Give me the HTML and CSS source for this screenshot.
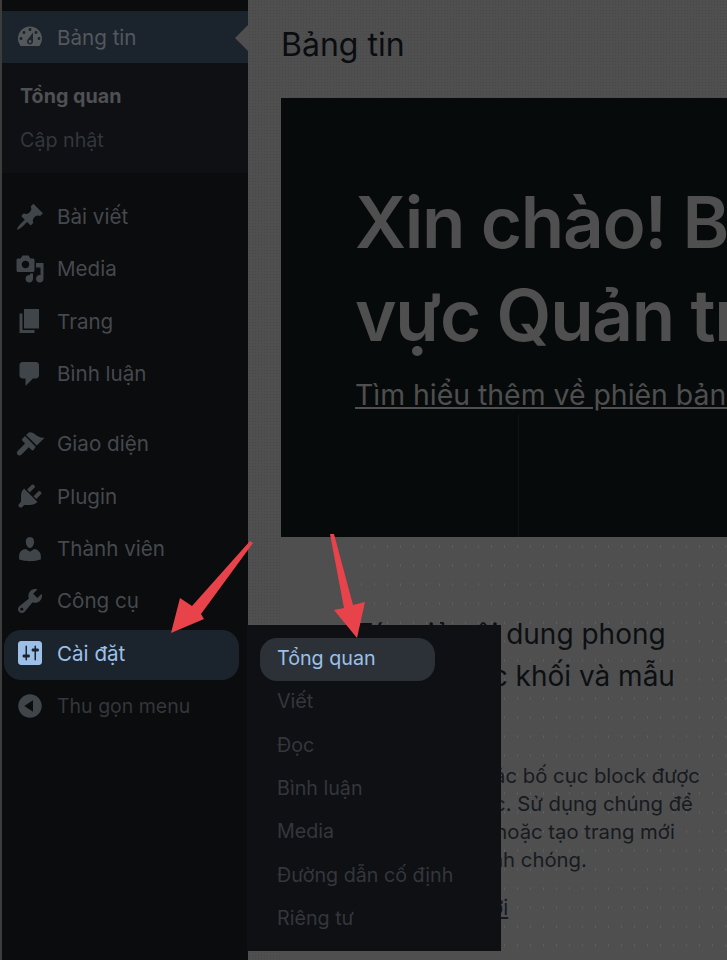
FILE: index.html
```html
<!DOCTYPE html>
<html lang="vi">
<head>
<meta charset="utf-8">
<title>Bảng tin</title>
<link rel="stylesheet" href="styles.css">
</head>
<body>
<div class="page">
  <aside class="sidebar">
    <ul class="menu">
      <li class="item active"><svg class="ico" viewBox="0 0 20 20"><path d="M3.76 16h12.48c1.1-1.37 1.76-3.11 1.76-5 0-4.42-3.58-8-8-8s-8 3.58-8 8c0 1.89.66 3.63 1.76 5zM10 4c.55 0 1 .45 1 1s-.45 1-1 1-1-.45-1-1 .45-1 1-1zM6 6c.55 0 1 .45 1 1s-.45 1-1 1-1-.45-1-1 .45-1 1-1zm8 0c.55 0 1 .45 1 1s-.45 1-1 1-1-.45-1-1 .45-1 1-1zm-5.37 5.55L12 7v6c0 1.1-.9 2-2 2s-2-.9-2-2c0-.57.24-1.08.63-1.45zM4 10c.55 0 1 .45 1 1s-.45 1-1 1-1-.45-1-1 .45-1 1-1zm12 0c.55 0 1 .45 1 1s-.45 1-1 1-1-.45-1-1 .45-1 1-1zm-5 3c0-.55-.45-1-1-1s-1 .45-1 1 .45 1 1 1 1-.45 1-1z"/></svg><span>Bảng tin</span></li>
      <li class="submenu">
        <a class="sub strong">Tổng quan</a>
        <a class="sub">Cập nhật</a>
      </li>
    </ul>
    <ul class="menu group">
      <li class="item"><svg class="ico" viewBox="0 0 20 20"><path d="M10.44 3.02l1.82-1.82 6.36 6.35-1.83 1.82c-1.05-.68-2.48-.57-3.41.36l-.75.75c-.92.93-1.04 2.35-.35 3.41l-1.83 1.82-2.41-2.41-2.8 2.79c-.42.42-3.38 2.71-3.8 2.29s1.86-3.39 2.28-3.81l2.79-2.79L4.1 9.36l1.83-1.82c1.05.69 2.48.57 3.4-.36l.75-.75c.93-.92 1.05-2.35.36-3.41z"/></svg><span>Bài viết</span></li>
      <li class="item"><svg class="ico" viewBox="0 0 20 20"><path d="M13 11V4c0-.55-.45-1-1-1h-1.67L9 1H5L3.67 3H2c-.55 0-1 .45-1 1v7c0 .55.45 1 1 1h10c.55 0 1-.45 1-1zM7 4.5c1.38 0 2.5 1.12 2.5 2.5S8.38 9.5 7 9.5 4.5 8.38 4.5 7 5.62 4.5 7 4.5zM14 6h5v10.5c0 1.38-1.12 2.5-2.5 2.5S14 17.88 14 16.5s1.12-2.5 2.5-2.5c.17 0 .34.02.5.05V9h-3V6zm-4 8.05V13h2v3.5c0 1.38-1.12 2.5-2.5 2.5S7 17.88 7 16.5 8.12 14 9.5 14c.17 0 .34.02.5.05z"/></svg><span>Media</span></li>
      <li class="item"><svg class="ico" viewBox="0 0 20 20"><path d="M6 15V2h10v13H6zm-1 1h8v2H3V5h2v11z"/></svg><span>Trang</span></li>
      <li class="item"><svg class="ico" viewBox="0 0 20 20"><path d="M5 2h9c1.1 0 2 .9 2 2v7c0 1.1-.9 2-2 2h-2l-5 5v-5H5c-1.1 0-2-.9-2-2V4c0-1.1.9-2 2-2z"/></svg><span>Bình luận</span></li>
    </ul>
    <ul class="menu group2">
      <li class="item"><svg class="ico" viewBox="0 0 20 20"><path d="M14.48 11.06L7.41 3.99l1.5-1.5c.5-.56 2.3-.47 3.51.32 1.21.8 1.43 1.28 2.91 2.1 1.18.64 2.45 1.26 4.45.85zM13.77 11.77L6.7 4.7 4.93 6.47c-.39.39-.39 1.02 0 1.41l1.8 1.8-5 5c-.7.7-.7 1.8 0 2.5s1.8.7 2.5 0l5-5 1.8 1.8c.39.39 1.02.39 1.41 0z"/></svg><span>Giao diện</span></li>
      <li class="item"><svg class="ico" viewBox="0 0 20 20"><path d="M13.11 4.36L9.87 7.6 8 5.73l3.24-3.24c.35-.34 1.05-.2 1.56.32.52.51.66 1.21.31 1.55zm-8 1.77l.91-1.12 9.01 9.01-1.19.84c-.71.71-2.63 1.16-3.82 1.16H6.14L4.9 17.26c-.59.59-1.54.59-2.12 0-.59-.58-.59-1.53 0-2.12l1.24-1.24v-3.88c0-1.13.4-3.19 1.09-3.89zm7.26 3.97l3.24-3.24c.34-.35 1.04-.21 1.55.31.52.51.66 1.21.31 1.55l-3.24 3.25z"/></svg><span>Plugin</span></li>
      <li class="item"><svg class="ico" viewBox="0 0 20 20"><path d="M10 9.25c-2.27 0-2.73-3.44-2.73-3.44C7 4.02 7.82 2 9.97 2c2.16 0 2.98 2.02 2.71 3.81 0 0-.41 3.44-2.68 3.44zm0 2.57L12.72 10c2.39 0 4.52 2.33 4.52 4.53v2.49s-3.65 1.13-7.24 1.13c-3.65 0-7.24-1.13-7.24-1.13v-2.49c0-2.25 1.94-4.48 4.47-4.48z"/></svg><span>Thành viên</span></li>
      <li class="item"><svg class="ico" viewBox="0 0 20 20"><path d="M16.68 9.77c-1.34 1.34-3.3 1.67-4.95.99l-5.41 6.52c-.99.99-2.59.99-3.58 0s-.99-2.59 0-3.57l6.52-5.42c-.68-1.65-.35-3.61.99-4.95 1.28-1.28 3.12-1.62 4.72-1.06l-2.89 2.89 2.82 2.82 2.86-2.87c.53 1.58.18 3.39-1.08 4.65zM3.81 16.21c.4.39 1.04.39 1.43 0 .4-.4.4-1.04 0-1.43-.39-.4-1.03-.4-1.43 0-.39.39-.39 1.03 0 1.43z"/></svg><span>Công cụ</span></li>
      <li class="item current"><svg class="ico" viewBox="0 0 20 20"><path d="M18 16V4c0-1.1-.9-2-2-2H4c-1.1 0-2 .9-2 2v12c0 1.1.9 2 2 2h12c1.1 0 2-.9 2-2zM8 11h1c.55 0 1 .45 1 1s-.45 1-1 1H8v1.5c0 .28-.22.5-.5.5s-.5-.22-.5-.5V13H6c-.55 0-1-.45-1-1s.45-1 1-1h1V5.5c0-.28.22-.5.5-.5s.5.22.5.5V11zm5-2h-1c-.55 0-1-.45-1-1s.45-1 1-1h1V5.5c0-.28.22-.5.5-.5s.5.22.5.5V7h1c.55 0 1 .45 1 1s-.45 1-1 1h-1v5.5c0 .28-.22.5-.5.5s-.5-.22-.5-.5V9z"/></svg><span>Cài đặt</span>
        <div class="flyout">
          <a class="fly on">Tổng quan</a>
          <a class="fly">Viết</a>
          <a class="fly">Đọc</a>
          <a class="fly">Bình luận</a>
          <a class="fly">Media</a>
          <a class="fly">Đường dẫn cố định</a>
          <a class="fly">Riêng tư</a>
        </div>
      </li>
      <li class="item collapse"><svg class="ico" viewBox="0 0 20 20"><path d="M10 2.16c4.33 0 7.84 3.51 7.84 7.84s-3.51 7.84-7.84 7.84S2.16 14.33 2.16 10 5.71 2.16 10 2.16zm2 11.72V6.12L6.18 9.97z"/></svg><span>Thu gọn menu</span></li>
    </ul>
  </aside>
  <main class="main">
    <h1 class="title">Bảng tin</h1>
    <section class="welcome">
      <h2 class="hero">Xin chào! Bạn đang ở khu<br>vực Quản trị WordPress</h2>
      <a class="hero-link">Tìm hiểu thêm về phiên bản 6.5</a>
    </section>
    <section class="column">
      <h3 class="col-title">Tác giả nội dung phong<br>phú với các khối và mẫu</h3>
      <p class="col-text">Mẫu block là các bố cục block được<br>thiết kế từ trước. Sử dụng chúng để<br>lấy cảm hứng, hoặc tạo trang mới<br>theo cách nhanh chóng.</p>
      <a class="col-link">Thêm trang mới</a>
    </section>
  </main>
</div>
<svg class="arrows" viewBox="0 0 727 960" aria-hidden="true">
  <polygon points="253,543 201,614 204,619 171,633 180,598 192,606 250,541"/>
  <polygon points="330,534 334,534 353,605 365,602 357,638 334,610 344,608"/>
</svg>
</body>
</html>
```
FILE: styles.css
```css
* { box-sizing: border-box; }
html, body { margin: 0; height: 960px; overflow: hidden; }
body { font-family: Inter, "Noto Sans", sans-serif; background: #4f4f4f; position: relative; }
.page { display: flex; width: 727px; height: 960px; overflow: hidden; }

.sidebar {
  width: 248px; flex: none; height: 960px; padding: 11px 0 0 2px;
  background: #0a0c0d; box-shadow: inset 2px 0 0 #3c3c3c;
}
.menu { list-style: none; margin: 0; padding: 0; }
.group { padding-top: 17px; }
.group2 { padding-top: 17.6px; }
.item {
  display: flex; align-items: center; height: 52.4px; padding-left: 13px; gap: 12px;
  font-size: 20.6px; color: #45494e; position: relative;
}
.ico { width: 30px; height: 30px; flex: none; fill: #40454a; }
.active { background: #1b232d; color: #55585b; }
.active .ico { fill: #55585b; }
.active::after {
  content: ""; position: absolute; right: 0; top: 14px;
  border: 13px solid transparent; border-left: 0; border-right-color: #4f4f4f;
}
.submenu { background: #0e1013; height: 110px; padding-top: 11px; display: flex; flex-direction: column; }
.sub { height: 44px; line-height: 44px; padding-left: 18px; font-size: 19.7px; color: #33373c; }
.strong { font-weight: 700; color: #4e5054; }
.current { color: #9cc0e8; }
.current .ico { fill: #9cc0e8; }
.current::before {
  content: ""; position: absolute; left: 2px; right: 9px; top: 3px; bottom: 0;
  background: #1b232d; border-radius: 17px; z-index: 0;
}
.current .ico, .current span { position: relative; z-index: 1; }
.collapse { color: #33373c; font-size: 19.5px; }
.collapse .ico { fill: #40454a; }

.flyout {
  position: absolute; left: 245px; top: -2px; width: 254px; height: 326px; z-index: 2;
  background: #0e1013; padding: 13px 13px 0; display: flex; flex-direction: column;
}
.fly { display: block; height: 43.3px; line-height: 41.3px; padding-left: 17px; font-size: 19.7px; color: #33373c; width: 175px; white-space: nowrap; }
.on { background: #2c3138; color: #9cc0e8; border-radius: 17px; }

.main {
  flex: 1; min-width: 0; padding: 0 0 0 33px; overflow: hidden;
  background-color: #4f4f4f;
  background-image: radial-gradient(#474747 .7px, transparent .8px);
  background-size: 3px 3px;
}
.title { margin: 0; padding-top: 26px; height: 98px; font-size: 32px; line-height: 38px; font-weight: 400; color: #0a0c0f; white-space: nowrap; }
.welcome {
  width: 560px; height: 439px; padding: 78px 0 0 74px; white-space: nowrap;
  background: linear-gradient(#101313, #101313) no-repeat 237px 317px / 1px 122px, #070a0a;
}
.hero { margin: 0; font-size: 71px; line-height: 93px; font-weight: 600; color: #4f4f4f; letter-spacing: -1.3px; }
.hero-link { display: block; margin-top: 15px; font-size: 28.4px; line-height: 36px; color: #4f4f4f; text-decoration: underline; }
.column {
  height: 423px; padding: 76px 0 0; border-left: 74px solid #4f4f4f; white-space: nowrap; color: #0c0f12;
  background-color: #4f4f4f;
  background-image: radial-gradient(#5d6168 .6px, transparent .8px);
  background-size: 13px 19px;
  background-clip: padding-box;
  background-origin: padding-box;
}
.col-title { margin: 0; font-size: 28px; line-height: 42px; font-weight: 400; }
.col-text { margin: 65px 0 0; font-size: 20.3px; line-height: 28px; color: #171a1e; }
.col-link { display: block; margin-top: 20px; font-size: 20.6px; line-height: 28px; color: #121a24; text-decoration: underline; }

.arrows { position: absolute; left: 0; top: 0; width: 727px; height: 960px; z-index: 5; pointer-events: none; }
.arrows polygon { fill: #e8434a; }
```
